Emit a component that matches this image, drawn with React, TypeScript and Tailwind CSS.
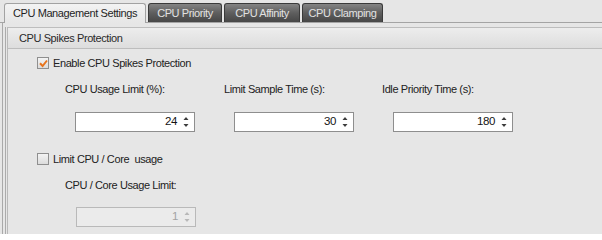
import React from "react";

const font = { fontFamily: '"Liberation Sans", Arial, sans-serif' };

function Spin({ disabled }: { disabled?: boolean }) {
  const c = disabled ? "#b8b8b8" : "#3c3c3c";
  return (
    <svg width="6" height="12" viewBox="0 0 6 12" className="shrink-0">
      <path d="M3 1 L5.5 4 L0.5 4 Z" fill={c} />
      <path d="M0.5 8 L5.5 8 L3 11 Z" fill={c} />
    </svg>
  );
}

function NumBox({ value, disabled }: { value: string; disabled?: boolean }) {
  return (
    <div
      className={
        "w-[120px] h-[20px] flex items-center justify-end pr-[5px] gap-[6px] border text-[11.5px] " +
        (disabled
          ? "bg-[#ebebeb] border-[#b9b9b9] text-[#a3a3a3]"
          : "bg-white border-[#8e8e8e] text-[#141414]")
      }
    >
      <span className="leading-none">{value}</span>
      <Spin disabled={disabled} />
    </div>
  );
}

function Check({ checked }: { checked?: boolean }) {
  return (
    <div className="w-[12px] h-[12px] border border-[#8f8f8f] bg-gradient-to-b from-[#f4f4f4] to-[#dcdcdc] flex items-center justify-center shrink-0">
      {checked && (
        <svg width="9" height="9" viewBox="0 0 9 9">
          <path d="M1 4.2 L3.6 7 L8 1.5" stroke="#e8741c" strokeWidth="2" fill="none" />
        </svg>
      )}
    </div>
  );
}

function Tab({ label, active, w }: { label: string; active?: boolean; w: string }) {
  if (active) {
    return (
      <div
        className={
          w +
          " h-[20px] -mb-px flex items-center justify-center rounded-t-[3px] border border-b-0 border-[#a2a2a2] bg-gradient-to-b from-[#f3f3f3] to-[#e6e6e6] text-[#1f1f1f]"
        }
      >
        {label}
      </div>
    );
  }
  return (
    <div
      className={
        w +
        " h-[19px] flex items-center justify-center rounded-t-[3px] border border-b-0 border-[#3a3a3a] bg-gradient-to-b from-[#848484] via-[#5e5e5e] to-[#474747] text-[#e2e2e2]"
      }
    >
      {label}
    </div>
  );
}

export default function App() {
  return (
    <div
      className="w-[602px] h-[234px] overflow-hidden bg-[#e6e6e6] text-[11px] tracking-[-0.4px] text-[#222222]"
      style={font}
    >
      <div className="h-[23px] flex items-end gap-[2px] pl-[4px] border-b border-[#a4a4a4]">
        <Tab label="CPU Management Settings" active w="w-[142px]" />
        <Tab label="CPU Priority" w="w-[74px]" />
        <Tab label="CPU Affinity" w="w-[76px]" />
        <Tab label="CPU Clamping" w="w-[81px]" />
      </div>
      <div className="ml-[2px] h-[211px] border-l border-[#a9a9a9] pl-[2px] pt-[4px]">
        <div className="h-full border-l border-[#ababab] pl-px">
          <div className="h-full border-l border-[#b9b9b9]">
            <div className="h-[22px] border-t border-b border-[#bdbdbd] bg-gradient-to-b from-[#ededed] to-[#dddddd] flex items-center pl-[11px] text-[#2a2a2a]">
              CPU Spikes Protection
            </div>
            <div className="pl-[29px] flex flex-col">
              <div className="mt-[8px] h-[12px] flex items-center gap-[4px]">
                <Check checked />
                <span>Enable CPU Spikes Protection</span>
              </div>
              <div className="pl-[28px] flex flex-col">
                <div className="mt-[14px] h-[13px] flex items-center">
                  <span className="w-[159px]">CPU Usage Limit (%):</span>
                  <span className="w-[158px]">Limit Sample Time (s):</span>
                  <span>Idle Priority Time (s):</span>
                </div>
                <div className="mt-[16px] flex pl-[10px] gap-[39px]">
                  <NumBox value="24" />
                  <NumBox value="30" />
                  <NumBox value="180" />
                </div>
              </div>
              <div className="mt-[21px] h-[12px] flex items-center gap-[4px]">
                <Check />
                <span>Limit CPU / Core&nbsp; usage</span>
              </div>
              <div className="pl-[28px] flex flex-col">
                <div className="mt-[14px] h-[13px] flex items-center">
                  <span>CPU / Core Usage Limit:</span>
                </div>
                <div className="mt-[15px] flex pl-[11px]">
                  <NumBox value="1" disabled />
                </div>
              </div>
            </div>
          </div>
        </div>
      </div>
    </div>
  );
}
